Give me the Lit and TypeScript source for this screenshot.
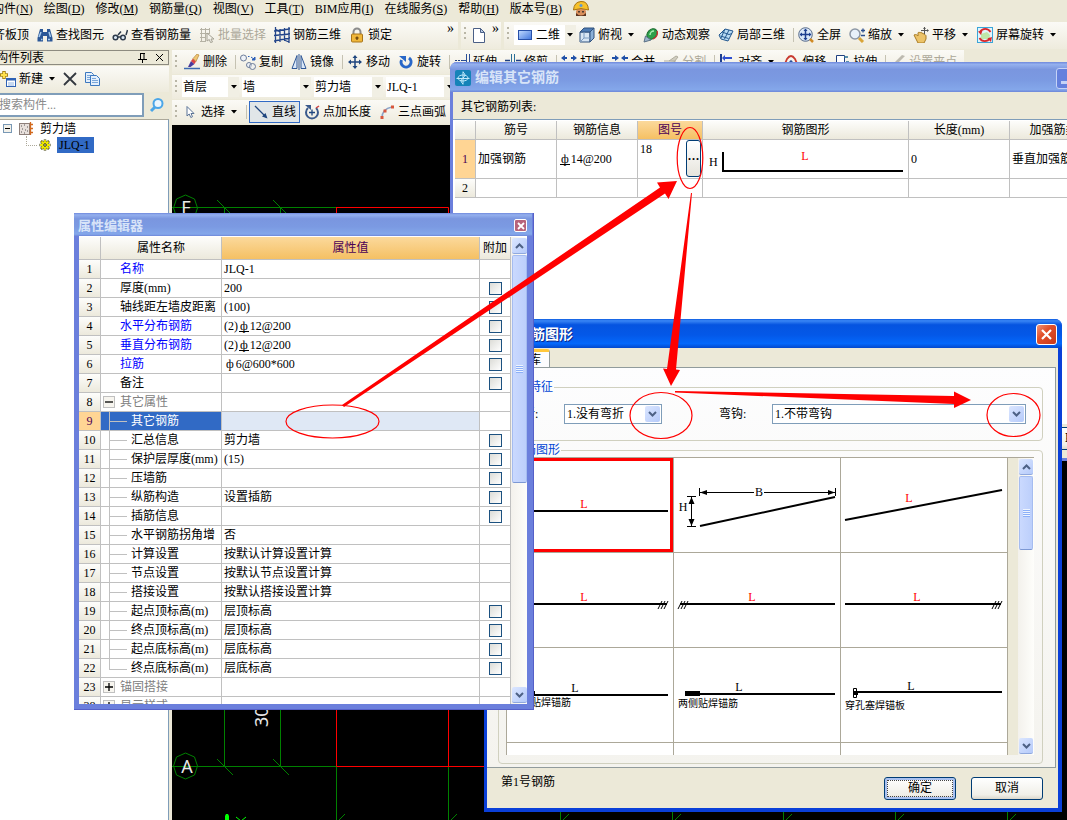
import { LitElement, html, css, svg, nothing, TemplateResult } from "lit";
import { customElement } from "lit/decorators.js";
import { classMap } from "lit/directives/class-map.js";

const icon = (body: TemplateResult) =>
  html`<svg class="ic" width="16" height="16" viewBox="0 0 16 16" aria-hidden="true">${body}</svg>`;

const caret = html`<svg class="caret" width="6" height="4" viewBox="0 0 6 4" aria-hidden="true"><path d="M0 0h6L3 3.5z" fill="#000"/></svg>`;

const icons: Record<string, TemplateResult> = {
  binoculars: icon(svg`<path d="M3 2h3v3h4V2h3l2.500 9v3.500H10V9H6v5.500H.5V11z" fill="#2b5797"/><path d="M2 10l2-5M12 5l1.500 5M4 12.500h1.500M11 12.500h2" stroke="#a9cdf0" stroke-width="1.500"/>`),
  glasses: icon(svg`<path d="M6 8l3-3.500M14 8l1.500-5" stroke="#2d3a4a" fill="none" stroke-width="1.500"/><circle cx="3.500" cy="10.500" r="2.300" fill="#dbe8f4" stroke="#2d3a4a" stroke-width="1.500"/><circle cx="11" cy="10.500" r="2.300" fill="#dbe8f4" stroke="#2d3a4a" stroke-width="1.500"/><path d="M6 10h3" stroke="#2d3a4a" stroke-width="1.500"/>`),
  batch: icon(svg`<path d="M1 2.500h10M1 6.500h10M1 10.500h6M1 14.500h6M2.500 1v14M6.500 1v14M10.500 1v5" stroke="#b5b2a4" fill="none"/><path d="M8 6l7 6h-3l1.500 3-2 .5-1.200-3L8 14z" fill="#f4f2ea" stroke="#a5a294"/>`),
  mesh: icon(svg`<path d="M1.500 0v16M6 2v13M10.500 1v13M15 0v16M0 4l16-2M0 8.500L16 7M0 14l16-3M1 2l5 3M10 13l5 2" stroke="#23458a" fill="none" stroke-width="1.300"/>`),
  lock: icon(svg`<path d="M4.500 8V5a3.500 3.500 0 017 0v3" fill="none" stroke="#8b8b8b" stroke-width="2"/><rect x="2.500" y="7" width="11" height="8" rx="1" fill="#f0b73a" stroke="#a8741a"/><path d="M8 9.500v3.500M6.500 11h3" stroke="#6a430a" stroke-width="1.300"/>`),
  page: icon(svg`<path d="M2.500 1.500h7l4 4v10h-11z" fill="#fff" stroke="#4a5f86"/><path d="M9.500 1.500v4h4z" fill="#b9cbe6" stroke="#4a5f86"/>`),
  plane: icon(svg`<defs><linearGradient id="pl" x1="0" y1="0" x2="1" y2="1"><stop offset="0" stop-color="#c4dcff"/><stop offset="1" stop-color="#3f74dd"/></linearGradient></defs><rect x="1.500" y="3.500" width="13" height="9" fill="url(#pl)" stroke="#2750a8"/>`),
  cube: icon(svg`<path d="M1 5h10v10H1z" fill="#d8e6f4" stroke="#31527f"/><path d="M1 5l4-4h10l-4 4z" fill="#4f7db5" stroke="#31527f"/><path d="M11 5l4-4v10l-4 4z" fill="#8bb0d8" stroke="#31527f"/><path d="M5 5v6h6M5 11l-4 4" stroke="#7c9cc0" fill="none"/>`),
  orbit: icon(svg`<ellipse cx="9" cy="7" rx="5.800" ry="4.500" transform="rotate(-45 9 7)" fill="#2fa04a" stroke="#1c6b30"/><path d="M7 8a4 4 0 014-4" stroke="#a9efb2" fill="none" stroke-width="1.500"/><path d="M10 12c4-2 5-5 4-8" stroke="#c33" fill="none" stroke-width="1.300"/><path d="M1 15l1.500-6 5.500 4z" fill="#9db4ca" stroke="#5b7186"/>`),
  local3d: icon(svg`<path d="M1 8l6-6 8 2-5 10-7-2z" fill="#b9dcf4" stroke="#23588f"/><path d="M4 5l7 2.500M7 2l-4 9M11 3L6.500 12M11 7.500l3-1M2.500 9l8 2.500" stroke="#23588f" fill="none"/>`),
  fullscreen: icon(svg`<circle cx="7.500" cy="7.500" r="6.800" fill="#d9e7f8" stroke="#5a6d8c"/><path d="M7.500 2.500v10M2.500 7.500h10" stroke="#1d3f8f" stroke-width="1.500"/><path d="M7.500 1.500L5.500 4h4zM7.500 13.500l-2-2.500h4zM1.500 7.500L4 5.500v4zM13.500 7.500L11 5.500v4z" fill="#1d3f8f"/><path d="M12 12l3 3" stroke="#d08a24" stroke-width="2.500"/>`),
  zoom: icon(svg`<circle cx="6" cy="7" r="5" fill="#e8f1fa" stroke="#8c97a6" stroke-width="1.500"/><path d="M10 11l4 4" stroke="#d9a437" stroke-width="3"/><path d="M12 3.500h4M14 1.500v4M12 8.500h4" stroke="#2d4f8f" stroke-width="1.300"/>`),
  pan: icon(svg`<path d="M1 8c2-1 3 0 4 1V6c0-1 2-1 2 0 1-1 2-1 2 .5 1-.5 2 0 2 1 1 0 2 .5 2 1.500v3l-2 4H5z" fill="#ecc368" stroke="#a87b24"/><path d="M11.500 0v7M8 3.500h7" stroke="#555"/><path d="M11.500 0L10 2h3zM16 3.500L14 2v3z" fill="#555"/>`),
  screenrot: icon(svg`<rect x=".5" y=".5" width="15" height="15" fill="#e2f3fb" stroke="#3aa5d8"/><path d="M4 12h8l1-4-3-3-6 2z" fill="#bfe6a8"/><path d="M13.500 5A6 6 0 003 5M2.500 11a6 6 0 0010.500 0" stroke="#d8282c" fill="none" stroke-width="1.800"/><path d="M1 4.500l4.500-1L4 8zM15 10l-4.500 1.500L14 15z" fill="#d8282c"/>`),
  brush: icon(svg`<path d="M0 14.500h16" stroke="#3d6bb0" stroke-width="1.500"/><path d="M4 13l3-6 3.500 3-4 3z" fill="#4a3a9c"/><path d="M7 7l2-2.500 3 3-1.500 2.500z" fill="#d44"/><path d="M9 4.500L13 0l2 1-3 6.500z" fill="#f0c674" stroke="#a8792c" stroke-width=".6"/>`),
  copyobj: icon(svg`<circle cx="3.500" cy="4" r="3" fill="#eef2f8" stroke="#6c7c99"/><circle cx="9" cy="11" r="2.500" fill="#eef2f8" stroke="#6c7c99"/><circle cx="12.500" cy="12.500" r="3" fill="#eef2f8" fill-opacity=".5" stroke="#6c7c99"/><path d="M8 2.500h1.500M11 3l2 1.500M12 6h3V3z" stroke="#2c5fb8" fill="#2c5fb8"/>`),
  mirror: icon(svg`<path d="M6 1.500V14.500H1zM10 1.500V14.500h5z" fill="#dbe8f8" stroke="#2f5796"/><path d="M8 0v16" stroke="#2f5796"/>`),
  move: icon(svg`<path d="M8 2v12M2 8h12" stroke="#1f467f" stroke-width="1.500"/><path d="M8 1L5.500 4h5zM8 15l-2.500-3h5zM1 8l3-2.500v5zM15 8l-3-2.500v5z" fill="#1f467f"/>`),
  rotate: icon(svg`<path d="M11 4a5 5 0 11-7.500 2" fill="none" stroke="#2867c8" stroke-width="3"/><path d="M1 2h7v6z" fill="#2867c8"/>`),
  extend: icon(svg`<path d="M1 6.500h8" stroke="#1f3f7f" stroke-dasharray="2 1"/><path d="M12.500 0v14M15.500 0v14M8 6.500h4" stroke="#2a4f98"/>`),
  trim: icon(svg`<path d="M0 6.500h5M11 6.500h5" stroke="#1f3f7f" stroke-width="1.500"/><path d="M6.500 0v12M9.500 0v12" stroke="#2a6f98"/>`),
  breaks: icon(svg`<path d="M0 4l4-3v2h2v2H4v2zM16 4l-4-3v2h-2v2h2v2z" fill="#1e4fa8"/>`),
  join: icon(svg`<path d="M7 4L3 1v2H0v2h3v2zM9 4l4-3v2h3v2h-3v2z" fill="#1e4fa8"/>`),
  split: icon(svg`<path d="M1 7h12M6 7l7-5 2 1-4 5" stroke="#b0ad9e" fill="#cfccbf"/>`),
  align: icon(svg`<path d="M2 0v14" stroke="#1f3f8f" stroke-width="2"/><path d="M4 4h9M4 9h6" stroke="#2f4fd0" stroke-width="2"/><path d="M6 1L3 4l3 3z" fill="#2f4fd0"/>`),
  offset: icon(svg`<path d="M1 12l3-7q4-6 8 0l3 7" fill="none" stroke="#c8392f" stroke-width="1.800"/><path d="M5 12l2-4q1-2 2 0l2 4" fill="none" stroke="#2a4f98" stroke-width="1.500"/>`),
  stretch: icon(svg`<path d="M2.500 1.500h8v11h-8z" fill="#fff" stroke="#1f3f7f"/><path d="M10 3h4M12 8h3" stroke="#2a6f98" stroke-width="1.500"/>`),
  pen: icon(svg`<path d="M1 12L12 1l3 1L6 11z" fill="#bdbab0"/>`),
  cursor: icon(svg`<path d="M5 2.500v9.500l2.200-2 1.600 3.500 1.700-.8L9 9.500h3z" fill="#fff" stroke="#5a7396"/>`),
  line: icon(svg`<path d="M2 2l11 11" stroke="#1f467f" stroke-width="1.300"/><path d="M14.500 14.500L9 12.500l3.500-3.500z" fill="#1f467f"/>`),
  pointlen: icon(svg`<path d="M12 4A6 6 0 114 4" fill="none" stroke="#3b5a8c" stroke-width="2"/><path d="M1 1h6v5z" fill="#3b5a8c"/><path d="M8 5.500v6M5 8.500h6" stroke="#1f467f" stroke-width="1.300"/><path d="M12 4l3-2" stroke="#d04040" stroke-width="1.500"/>`),
  arc: icon(svg`<path d="M3 14C3 7 7 4 13 3" fill="none" stroke="#8aa3c8" stroke-width="1.500"/><rect x="1.500" y="12" width="3" height="3" fill="#d8573c"/><rect x="4.500" y="5.500" width="3" height="3" fill="#d8573c"/><rect x="12" y="1.500" width="3" height="3" fill="#d8573c"/>`),
  create: icon(svg`<rect x="6.500" y="7.500" width="9" height="8" fill="#fff" stroke="#2f62b5"/><path d="M6.500 8.500h9" stroke="#2f62b5" stroke-width="2"/><path d="M8 12h6M8 14h6" stroke="#8fb3e3"/><path d="M4 0v8M0 4h8" stroke="#a8861a" stroke-width="3.500"/><path d="M4 1v6M1 4h6" stroke="#ffe14d" stroke-width="2"/>`),
  remove: icon(svg`<path d="M2 2l12 12M14 2L2 14" stroke="#33383f" stroke-width="1.800"/>`),
  copy: icon(svg`<path d="M1.500 1.500h6l2 2v8h-8z" fill="#e3effc" stroke="#3c78bf"/><path d="M3 4.500h4M3 6.500h4M3 8.500h3" stroke="#7aa7da"/><path d="M6.500 4.500h6l3 3v7h-9z" fill="#e3effc" stroke="#3c78bf"/><path d="M8 7.500h4M8 9.500h6M8 11.500h6" stroke="#7aa7da"/>`),
  search: icon(svg`<circle cx="9" cy="6.500" r="4.500" fill="#eaf6ff" stroke="#4ba6e8" stroke-width="2"/><path d="M6 10l-4 4" stroke="#4ba6e8" stroke-width="3"/>`),
  wall: icon(svg`<rect x="1.500" y="2.500" width="10" height="11" fill="#e8e0dc" stroke="#8d7f7a"/><path d="M3 5h1M6 4h1M9 6h1M4 8h1M7 9h1M3 11h1M6 12h1M9 10h1" stroke="#555"/><path d="M12.500 1v13M12 3.500h3M12 7.500h3M12 11.500h3" stroke="#d2691e" stroke-width="1.300"/>`),
  gear: icon(svg`<path d="M8 2.500v11M2.500 8h11M4 4l8 8M12 4l-8 8" stroke="#3a3800" stroke-width="2.500"/><path d="M8 3v10M3 8h10M4.500 4.500l7 7M11.500 4.500l-7 7" stroke="#f2ec00" stroke-width="1.800"/><circle cx="8" cy="8" r="3" fill="#f2ec00"/><circle cx="8" cy="8" r="1.300" fill="#fff" stroke="#3a3800"/>`),
  worker: icon(svg`<rect x="3" y="8" width="10" height="7" rx="3" fill="#d98f5c"/><path d="M3 12q5 5 10 0v3H3z" fill="#5a3420"/><path d="M.5 9Q1 1 8 .5t7.500 8.500q-7.500-3-15 0z" fill="#f7c22b" stroke="#a8740e"/><circle cx="8" cy="4.500" r="1.500" fill="#5a9ad8"/><path d="M6 10v1.500M10 10v1.500" stroke="#222" stroke-width="1.500"/>`),
  app: icon(svg`<rect width="16" height="16" rx="2" fill="#1583b8"/><path d="M8 1.500v13M1.500 8.500h13" stroke="#bfe9fa"/><ellipse cx="8" cy="8" rx="5" ry="3" fill="none" stroke="#bfe9fa"/><path d="M8 2q4 3 0 6t0 6" stroke="#bfe9fa" fill="none"/>`),
};

type Tool = { icon: string; label?: string; drop?: boolean; off?: boolean; on?: boolean } | "|";

const menus = ["构件(N)", "绘图(D)", "修改(M)", "钢筋量(Q)", "视图(V)", "工具(T)", "BIM应用(I)", "在线服务(S)", "帮助(H)", "版本号(B)"];

const mainTools: Tool[] = [
  { icon: "", label: "齐板顶" },
  { icon: "binoculars", label: "查找图元" },
  { icon: "glasses", label: "查看钢筋量" },
  { icon: "batch", label: "批量选择", off: true },
  { icon: "mesh", label: "钢筋三维" },
  { icon: "lock", label: "锁定" },
];
const viewTools: Tool[] = [
  { icon: "cube", label: "俯视", drop: true },
  { icon: "orbit", label: "动态观察" },
  { icon: "local3d", label: "局部三维" },
  "|",
  { icon: "fullscreen", label: "全屏" },
  { icon: "zoom", label: "缩放", drop: true },
  { icon: "pan", label: "平移", drop: true },
  { icon: "screenrot", label: "屏幕旋转", drop: true },
];
const editTools: Tool[] = [
  { icon: "brush", label: "删除" }, "|",
  { icon: "copyobj", label: "复制" },
  { icon: "mirror", label: "镜像" }, "|",
  { icon: "move", label: "移动" },
  { icon: "rotate", label: "旋转" }, "|",
  { icon: "extend", label: "延伸" },
  { icon: "trim", label: "修剪" }, "|",
  { icon: "breaks", label: "打断" },
  { icon: "join", label: "合并" },
  { icon: "split", label: "分割", off: true }, "|",
  { icon: "align", label: "对齐", drop: true },
  { icon: "offset", label: "偏移" },
  { icon: "stretch", label: "拉伸" }, "|",
  { icon: "pen", label: "设置夹点", off: true },
];
const drawTools: Tool[] = [
  { icon: "cursor", label: "选择", drop: true }, "|",
  { icon: "line", label: "直线", on: true },
  { icon: "pointlen", label: "点加长度" },
  { icon: "arc", label: "三点画弧" },
];

type Prop = { n: number; name: string; value?: unknown; check?: boolean; kind?: "link" | "group" | "child" | "last"; open?: boolean; sel?: boolean };
const bar2 = html`<span class="bar2">ф</span>`;
const props: Prop[] = [
  { n: 1, name: "名称", value: "JLQ-1", kind: "link" },
  { n: 2, name: "厚度(mm)", value: "200", check: true },
  { n: 3, name: "轴线距左墙皮距离", value: "(100)", check: true },
  { n: 4, name: "水平分布钢筋", value: html`(2)${bar2}12@200`, check: true, kind: "link" },
  { n: 5, name: "垂直分布钢筋", value: html`(2)${bar2}12@200`, check: true, kind: "link" },
  { n: 6, name: "拉筋", value: html`<span class="bar1">ф</span>6@600*600`, check: true, kind: "link" },
  { n: 7, name: "备注", check: true },
  { n: 8, name: "其它属性", kind: "group", open: true },
  { n: 9, name: "其它钢筋", kind: "child", sel: true },
  { n: 10, name: "汇总信息", value: "剪力墙", check: true, kind: "child" },
  { n: 11, name: "保护层厚度(mm)", value: "(15)", check: true, kind: "child" },
  { n: 12, name: "压墙筋", check: true, kind: "child" },
  { n: 13, name: "纵筋构造", value: "设置插筋", check: true, kind: "child" },
  { n: 14, name: "插筋信息", check: true, kind: "child" },
  { n: 15, name: "水平钢筋拐角增", value: "否", kind: "child" },
  { n: 16, name: "计算设置", value: "按默认计算设置计算", kind: "child" },
  { n: 17, name: "节点设置", value: "按默认节点设置计算", kind: "child" },
  { n: 18, name: "搭接设置", value: "按默认搭接设置计算", kind: "child" },
  { n: 19, name: "起点顶标高(m)", value: "层顶标高", check: true, kind: "child" },
  { n: 20, name: "终点顶标高(m)", value: "层顶标高", check: true, kind: "child" },
  { n: 21, name: "起点底标高(m)", value: "层底标高", check: true, kind: "child" },
  { n: 22, name: "终点底标高(m)", value: "层底标高", check: true, kind: "last" },
  { n: 23, name: "锚固搭接", kind: "group" },
  { n: 38, name: "显示样式", kind: "group" },
];

const hatch = (x: number, y: number) =>
  svg`<path d="M${x} ${y + 4}l4-8M${x + 3} ${y + 4}l4-8M${x + 6} ${y + 4}l4-8" stroke="#000"/>`;
const L = (x: number, y: number, red = true) =>
  svg`<text x=${x} y=${y} text-anchor="middle" fill=${red ? "#f00" : "#000"}>L</text>`;

// Each bar shape is drawn in a 166 x 94 box.
const shapes: { label: string; body: TemplateResult | typeof nothing }[] = [
  { label: "直筋", body: svg`<path d="M6 53h155" class="bar"/>${L(77, 50)}` },
  { label: "斜筋 B H", body: svg`<path d="M26 68l135-29" class="bar"/><text x="9" y="53" text-anchor="middle">H</text><path d="M17.500 38v30M13 38.500h9M13 68.500h9M25.500 30v8M161.500 30v8M26 34.500h54M90 34.500h71" stroke="#000"/><path d="M17.500 39l-3 7h6zM17.500 68l-3-7h6zM26 34.500l7-2.500v5zM161 34.500l-7-2.500v5z"/><text x="85" y="38" text-anchor="middle">B</text>` },
  { label: "斜筋", body: svg`<path d="M4 62l157-30" class="bar"/>${L(68, 44)}` },
  { label: "右端锚固", body: svg`<path d="M6 51h154" class="bar"/>${hatch(151, 52)}${L(77, 48)}` },
  { label: "左端锚固", body: svg`<path d="M6 51h155" class="bar"/>${hatch(4, 52)}${L(78, 48)}` },
  { label: "端部锚固", body: svg`<path d="M4 51h156" class="bar"/>${hatch(151, 52)}${L(76, 48)}` },
  { label: "单侧贴焊", body: svg`<path d="M12 47h149" class="bar"/><path d="M12 43h16v5H12z"/>${L(68, 44, false)}<text class="cap" x="4" y="58">单侧贴焊锚筋</text>` },
  { label: "两侧贴焊", body: svg`<path d="M12 46h149" class="bar"/><path d="M11 43h15v5H11z"/>${L(65, 43, false)}<text class="cap" x="4" y="59">两侧贴焊锚筋</text>` },
  { label: "穿孔塞焊", body: svg`<path d="M16 44h145" class="bar"/><path d="M12.500 40.500h3v9h-3z" fill="#fff" stroke="#000"/><path d="M13 43h4v4h-4z"/>${L(70, 42, false)}<text class="cap" x="4" y="61">穿孔塞焊锚板</text>` },
  { label: "", body: nothing },
  { label: "", body: nothing },
  { label: "", body: nothing },
];

const chevron = (up: boolean) =>
  html`<svg width="9" height="6" viewBox="0 0 9 6" aria-hidden="true"><path d=${up ? "M1 5l3.500-3.500L8 5" : "M1 1l3.500 3.500L8 1"} fill="none" stroke="#4d6185" stroke-width="2"/></svg>`;

@customElement("app-root")
export class AppRoot extends LitElement {
  static styles = css`
    :host {
      display: block; position: relative; height: 100vh; overflow: hidden; background: #ece9d8; color: #000;
      font: 12px/18px "Liberation Serif", "Noto Sans CJK SC", sans-serif;
    }
    * { box-sizing: border-box; }
    button, input, select { font: inherit; color: inherit; margin: 0; padding: 0; border: 0; background: none; border-radius: 0; }
    button { display: flex; align-items: center; white-space: nowrap; }
    svg { display: block; flex: none; }
    h2 { margin: 0; font: inherit; }
    .frame { height: 100%; margin-left: -8px; display: flex; flex-direction: column; }
    .menu { display: flex; align-items: center; gap: 11px; height: 17px; margin-bottom: 5px; }
    .bars { display: flex; gap: 3px; margin-bottom: 1px; }
    .strip { display: flex; align-items: center; background: linear-gradient(#fbfaf6, #eeebdd); padding: 0 2px; }
    .bars .strip { height: 27px; padding-bottom: 2px; }
    .bars .main { width: 466px; padding: 0 4px 2px 1px; }
    .bars .mini { width: 40px; }
    .bars .view { flex: 1; }
    .tool { gap: 3px; margin-right: 8px; height: 22px; flex: none; }
    .tool.off { color: #aca899; }
    .tool.on { border: 1px solid #316ac5; background: #e1e6e8; padding: 0 3px; margin-right: 4px; margin-left: -2px; }
    .caret { margin: 0 1px 0 3px; }
    .sep { width: 1px; height: 14px; background: #c5c2b2; margin-right: 4px; flex: none; }
    .grip { width: 2px; height: 15px; margin: 0 5px 0 1px; flex: none; background: repeating-linear-gradient(#b9b6a6 0 2px, transparent 2px 5px); }
    .more { margin-left: auto; font-size: 14px; height: 14px; align-self: flex-start; }
    .combo { display: grid; background: #fff; height: 20px; flex: none; margin-right: 3px; }
    .combo > * { grid-area: 1 / 1; }
    .combo select { appearance: none; width: 100%; padding: 0 14px 0 1px; outline: 0; }
    .combo .drop { justify-self: end; width: 11px; display: grid; place-items: center; background: #f1efe4; pointer-events: none; }
    .combo .drop .caret { margin: 0; }
    .combo .ic { align-self: center; margin-left: 3px; }
    .combo .iconic { padding-left: 22px; }
    .w57 { width: 57px; } .w62 { width: 62px; } .w69 { width: 69px; }
    .work { flex: 1; display: flex; min-height: 0; }
    .side { width: 177px; flex: none; display: flex; flex-direction: column; }
    .cap-bar { height: 15px; border: 1px solid #8d8b80; border-left: 0; display: flex; align-items: center; gap: 8px; padding: 0 4px; }
    .cap-bar h2 { margin-right: auto; line-height: 12px; }
    .side .strip { height: 26px; padding: 0 8px; margin: 1px 0; }
    .side .tool { margin-right: 6px; }
    .find { display: flex; height: 24px; }
    .find input { width: 152px; border: 2px solid #7f9db9; background: #fff; padding-left: 5px; color: #8a8a8a; outline: 0; }
    .find button { flex: 1; justify-content: center; }
    .tree { flex: 1; border-top: 1px solid #aca899; border-right: 1px solid #7f9db9; background: #fff; margin-top: 2px; padding: 0 0 0 11px; }
    .node { display: flex; align-items: center; height: 17px; gap: 6px; }
    .node .toggle { width: 9px; height: 9px; border: 1px solid #7898b5; background: #f3f1ea; display: grid; place-items: center; }
    .node.kid { position: relative; padding-left: 34px; gap: 4px; margin-top: -1px; }
    .node.kid::before { content: ""; position: absolute; left: 23px; top: 0; width: 10px; height: 9px; border: dotted #aca899; border-width: 0 0 1px 1px; }
    .node .pick { background: #316ac5; line-height: 16px; padding: 0 4px 0 2px; }
    .right { flex: 1; min-width: 0; display: flex; flex-direction: column; padding-left: 3px; }
    .right .strip { height: 24px; margin-bottom: 1px; }
    .edit { width: 792px; }
    .edit .grip { margin-right: 7px; }
    .combos { width: 600px; }
    .cad { flex: 1; width: 100%; min-height: 0; background: #000; }
    .cad text { fill: #e8e8e8; font: 18px "Noto Sans", sans-serif; }

    .win { position: absolute; display: flex; flex-direction: column; }
    .bar-t { display: flex; align-items: center; font-weight: bold; font-size: 14px; gap: 4px; flex: none; }
    .soft { color: #d8e4f8; background: linear-gradient(#6f88dc, #94b0ee 8%, #7a96df 25%, #7b9ae2 60%, #84a7ea 92%, #6d86d8); }
    .w-steel { left: 450px; top: 62px; width: 680px; height: 399px; background: #6b7fdc; padding: 0 3px 3px; border-radius: 7px 0 0 0; }
    .w-steel .bar-t { height: 30px; margin: 0 -3px; padding: 2px 53px 0 5px; border-radius: 7px 0 0 0; }
    .w-steel .min { margin-left: auto; width: 21px; height: 21px; border: 1px solid #c5d3f7; border-radius: 3px; background: #6480dd; padding: 8px 0 0 4px; }
    .w-steel .min i { width: 8px; height: 3px; background: #c5d3f7; }
    .w-steel .body { flex: 1; background: #ece9d8; display: flex; flex-direction: column; }
    .w-steel .lead { height: 27px; padding: 6px 8px 0; }
    .w-steel .list { flex: 1; background: #fff; border-top: 1px solid #7f9db9; padding: 1px 2px; }
    .w-steel .foot { height: 34px; display: flex; gap: 12px; align-items: flex-start; justify-content: flex-end; padding: 3px 14px 0; }
    table { border-collapse: separate; border-spacing: 0; table-layout: fixed; }
    th, td { font-weight: normal; padding: 0 2px; border-right: 1px solid #c0c0c0; border-bottom: 1px solid #c0c0c0; white-space: nowrap; overflow: hidden; text-align: left; }
    th { text-align: center; padding: 0; background: linear-gradient(#fdfdfb, #ece9dc); }
    .hot { background: linear-gradient(#fbd99c, #f5c063); color: #4b0055; }
    th.cur { background: #ffd594; color: #4b0055; }
    .steel { width: 655px; }
    .steel thead th { height: 19px; }
    .steel .r1 > * { height: 39px; }
    .steel .r2 > * { height: 19px; }
    .no { display: flex; justify-content: space-between; height: 38px; }
    .no button { width: 15px; height: 37px; border: 1px solid #003c74; border-radius: 3px; background: linear-gradient(#fff, #e6e4dc); justify-content: center; font-weight: bold; }
    .steel .no-cell { padding: 0 1px 0 2px; }
    .steel .pic { padding: 0; }
    .bar { stroke: #000; stroke-width: 2; fill: none; }
    svg text { font: 12px "Liberation Serif", "Noto Sans CJK SC", sans-serif; }

    .w-shape { left: 484px; top: 319px; width: 578px; height: 493px; background: #0a3fd8; padding: 0 4px 4px 3px; border-radius: 7px 7px 0 0; }
    .w-shape .bar-t { height: 29px; margin: 0 -4px 0 -3px; padding: 2px 5px 0; border-radius: 7px 7px 0 0; color: #fff; text-shadow: 1px 1px #0a2a8c; background: linear-gradient(#0a5ae0, #3a86f5 6%, #0554e0 20%, #0458e8 55%, #0468fb 85%, #0348cc); }
    .x { margin-left: auto; width: 21px; height: 21px; border: 1px solid #fff; border-radius: 3px; background: linear-gradient(135deg, #ee9478, #e2502a 40%, #c8381a); justify-content: center; }
    .w-shape .body { flex: 1; background: #ece9d8; display: flex; flex-direction: column; min-height: 0; }
    .tab { width: 63px; height: 19px; border-top: 3px solid #ffc73c; border-right: 1px solid #919b9c; border-radius: 0 3px 0 0; background: #fcfcfe; justify-content: flex-end; padding-right: 8px; line-height: 14px; margin-top: 1px; }
    .sheet { height: 401px; flex: none; border: 1px solid #919b9c; border-left: 0; margin: -1px 2px 0 0; background: linear-gradient(#fdfdfe, #f4f3ee); padding: 10px 12px 4px 11px; }
    fieldset { margin: 0; padding: 0; border: 1px solid #d0d0bf; border-radius: 4px; min-width: 0; }
    legend { color: #0046d5; padding: 0 1px; margin-left: 5px; line-height: 18px; }
    .opts { height: 44px; display: flex; align-items: center; padding: 0 16px 8px 12px; }
    .opts label { width: 53px; }
    .opts .l2 { margin-left: 57px; }
    .xsel { display: grid; height: 20px; width: 98px; }
    .xsel.wide { flex: 1; }
    .xsel > * { grid-area: 1 / 1; }
    .xsel select { appearance: none; border: 1px solid #7f9db9; background: #fff; padding-left: 2px; width: 100%; outline: 0; }
    .xsel span, .sb button { border-radius: 2px; background: linear-gradient(135deg, #dbe6ff, #b5cafa); display: grid; place-items: center; }
    .xsel span { justify-self: end; align-self: center; width: 15px; height: 16px; margin-right: 2px; pointer-events: none; }
    .set { height: 323px; padding: 0 8px 7px 7px; }
    .set legend { margin-bottom: -2px; }
    .scroller { display: flex; height: 298px; border-top: 1px solid #aca899; overflow: hidden; }
    .shapes { display: grid; grid-template-columns: repeat(3, 167px); grid-auto-rows: 95px; border-left: 1px solid #aca899; align-self: flex-start; }
    .shape { background: #fff; border: 0 solid #aca899; border-width: 0 1px 1px 0; overflow: hidden; }
    .shape.sel { box-shadow: inset 0 0 0 3px #f00; }
    .shape .cap { font-size: 10px; }
    .gap { flex: 1; background: #ece9d8; }
    .sb { width: 16px; flex: none; display: flex; flex-direction: column; background: linear-gradient(90deg, #f3f1ec, #fefefb); padding: 1px; }
    .sb button { height: 16px; flex: none; border-bottom: 1px solid #8fa8dd; }
    .sb .thumb { border-radius: 2px; border: 1px solid #a5bcf0; border-bottom-color: #7c98d4; background: linear-gradient(90deg, #cad9fe, #bccffb); margin: 1px 0 auto; display: grid; place-items: center; }
    .sb .thumb::after { content: ""; width: 7px; height: 8px; background: repeating-linear-gradient(#eef4fe 0 1px, #8cb0f8 1px 2px); }
    .t74 { height: 74px; } .t228 { height: 228px; }
    .actions { flex: 1; display: flex; align-items: center; gap: 15px; padding: 0 15px 0 14px; }
    .actions p { margin: 0 auto 12px 0; }
    .push { width: 72px; height: 23px; border: 1px solid #003c74; border-radius: 3px; background: linear-gradient(#fff, #f0efe8 80%, #dcd8cc); justify-content: center; }
    .push.focus { box-shadow: inset 0 0 0 2px #a9c1f0; outline: 1px dotted #444; outline-offset: -4px; }

    .w-props { left: 74px; top: 213px; width: 460px; height: 497px; background: #6b7fdc; padding: 0 6px 5px 5px; border: 1px solid #5560c8; border-width: 0 1px 1px 0; }
    .w-props .bar-t { height: 23px; margin: 0 -5px 0 -5px; padding: 2px 5px 0 4px; font-size: 13px; }
    .w-props .x { width: 13px; height: 13px; border-radius: 2px; background: #b8647a; }
    .w-props .body { flex: 1; min-height: 0; display: flex; background: #ece9d8; overflow: hidden; border-top: 1px solid #fff; }
    .grid { width: 432px; flex: none; background: #fff; align-self: flex-start; }
    .grid thead th { height: 23px; }
    .grid tbody > tr > * { height: 19px; line-height: 17px; }
    .grid .name { display: flex; align-items: center; padding-left: 17px; height: 18px; }
    .grid td.nm { padding: 0 0 0 2px; }
    .grid .link { color: #00f; }
    .grid .group { color: #808080; padding-left: 0; gap: 5px; }
    .grid .child { padding-left: 6px; }
    .grid .child::before { content: ""; width: 17px; height: 18px; margin-right: 4px; border-left: 1px solid #c0c0c0; background: linear-gradient(#c0c0c0, #c0c0c0) 0 9px / 17px 1px no-repeat; }
    .grid .last::before { height: 10px; align-self: flex-start; border-bottom: 1px solid #c0c0c0; background: none; }
    .grid .box { width: 12px; height: 12px; border: 1px solid #c0c0c0; background: #f7f5ef; display: grid; place-items: center; }
    .grid .picked { background: #316ac5; color: #fff; }
    .grid .value-on { background: #dfe8f5; }
    .grid .ck { text-align: center; padding: 0; }
    .grid input { appearance: none; display: block; width: 13px; height: 13px; margin: 0 auto; border: 1px solid #1c5180; background: linear-gradient(135deg, #dcdcd7, #fff); }
    .bar1, .bar2 { display: inline-block; line-height: 9px; height: 10px; padding: 0 1px; margin: 0 1px; }
    .bar2 { border-bottom: 1px solid #000; }
    .w-props .sb { margin-left: auto; width: 17px; }
    .notes { position: absolute; left: 0; top: 0; width: 100%; height: 100%; pointer-events: none; }
  `;

  private tools(list: Tool[]) {
    return list.map((t) =>
      t === "|"
        ? html`<span class="sep"></span>`
        : html`<button class=${classMap({ tool: true, off: !!t.off, on: !!t.on })}>
            ${t.icon ? icons[t.icon] : nothing}${t.label ? html`<span>${t.label}</span>` : nothing}${t.drop ? caret : nothing}
          </button>`
    );
  }

  private combo(value: string, label: string, width: string, ic?: string) {
    return html`<div class="combo ${width}">
      <select class=${ic ? "iconic" : ""} aria-label=${label}><option>${value}</option></select>
      ${ic ? icons[ic] : nothing}<span class="drop">${caret}</span>
    </div>`;
  }

  private scrollbar(size: string) {
    return html`<div class="sb">
      <button aria-label="向上">${chevron(true)}</button>
      <div class="thumb ${size}"></div>
      <button aria-label="向下">${chevron(false)}</button>
    </div>`;
  }

  private cad() {
    const tick = (x: number, y: number) => svg`<path d="M${x - 7} ${y - 7}l16 16"/>`;
    const ring = (y: number) => svg`<path d="M185.500 ${y - 13}l9 4 3 9-3 9-9 4-9-4-3-9 3-9z"/>`;
    return html`<svg class="cad" role="img" aria-label="绘图区"><g transform="translate(-172 -125)">
      <g fill="none" stroke="#008000">
        <path d="M172 207.500h164M172 766.500h164M224.500 207v559M280.500 207v559M336.500 766v60M448.500 766v60M560.500 811v15M672.500 811v15M783.500 811v15M895.500 811v15M1007.500 811v15"/>
        ${tick(224, 207)}${tick(280, 207)}${tick(224, 766)}${tick(280, 766)}${ring(208)}${ring(766)}
        <path d="M339 820l6-6M451 820l6-6M563 820l6-6M675 820l6-6M786 820l6-6M898 820l6-6M1010 820l6-6"/>
      </g>
      <path d="M336 207.500h112.500V766M336.500 207v559.500H490" fill="none" stroke="#f00"/>
      <path d="M225 822v-6l1-2h2l1 2v6z" fill="#0f0"/><path d="M236 817l5 4 5-4" stroke="#0f0" fill="none"/>
      <text x="186" y="214" text-anchor="middle">F</text>
      <text x="187" y="773" text-anchor="middle">A</text>
      <text transform="translate(268 727) rotate(-90)">3000</text>
    </g></svg>`;
  }

  private steelWindow() {
    return html`<section class="win w-steel">
      <div class="bar-t soft">${icons.app}<h2>编辑其它钢筋</h2><button class="min" aria-label="最小化"><i></i></button></div>
      <div class="body">
        <div class="lead">其它钢筋列表:</div>
        <div class="list">
          <table class="steel">
            <colgroup><col width="21"><col width="81"><col width="81"><col width="65"><col width="206"><col width="101"><col width="100"></colgroup>
            <thead><tr><th></th><th>筋号</th><th>钢筋信息</th><th class="hot">图号</th><th>钢筋图形</th><th>长度(mm)</th><th>加强筋类型</th></tr></thead>
            <tbody>
              <tr class="r1"><th class="cur">1</th><td>加强钢筋</td><td>${bar2}14@200</td>
                <td class="no-cell"><div class="no"><span>18</span><button aria-label="选择图号">···</button></div></td>
                <td class="pic"><svg width="205" height="38"><text x="6" y="26">H</text><path d="M20 12v19h180" class="bar"/>${L(102, 20)}</svg></td>
                <td>0</td><td>垂直加强筋</td></tr>
              <tr class="r2"><th>2</th><td></td><td></td><td></td><td></td><td></td><td></td></tr>
            </tbody>
          </table>
        </div>
        <div class="foot"><button class="push">确定</button><button class="push">取消</button></div>
      </div>
    </section>`;
  }

  private shapeWindow() {
    return html`<section class="win w-shape">
      <div class="bar-t"><h2>选择钢筋图形</h2>
        <button class="x" aria-label="关闭"><svg width="13" height="13"><path d="M2 2l9 9M11 2l-9 9" stroke="#fff" stroke-width="2.200"/></svg></button></div>
      <div class="body">
        <button class="tab">钢筋图库</button>
        <div class="sheet">
          <fieldset><legend>图形特征</legend>
            <div class="opts">
              <label for="bend">弯折:</label>
              <div class="xsel"><select id="bend"><option>1.没有弯折</option></select><span>${chevron(false)}</span></div>
              <label class="l2" for="hook">弯钩:</label>
              <div class="xsel wide"><select id="hook"><option>1.不带弯钩</option></select><span>${chevron(false)}</span></div>
            </div>
          </fieldset>
          <fieldset class="set"><legend>钢筋图形</legend>
            <div class="scroller">
              <div class="shapes">${shapes.map((s, i) => html`<button class=${classMap({ shape: true, sel: i === 0 })} aria-label=${s.label}>
                <svg width="166" height="94">${s.body}</svg></button>`)}</div>
              <div class="gap"></div>
              ${this.scrollbar("t74")}
            </div>
          </fieldset>
        </div>
        <div class="actions"><p>第1号钢筋</p><button class="push focus">确定</button><button class="push">取消</button></div>
      </div>
    </section>`;
  }

  private nameCell(p: Prop) {
    const child = p.kind === "child" || p.kind === "last";
    return html`<td class=${classMap({ nm: true, picked: !!p.sel })}>
      <div class=${classMap({ name: true, link: p.kind === "link", group: p.kind === "group", child, last: p.kind === "last" })}>
        ${p.kind === "group"
          ? html`<button class="box" aria-label=${p.open ? "折叠" : "展开"}><svg width="8" height="8"><path d=${p.open ? "M0 4h8" : "M0 4h8M4 0v8"} stroke="#000" stroke-width="1.300"/></svg></button>`
          : nothing}<span>${p.name}</span>
      </div></td>`;
  }

  private propsWindow() {
    return html`<section class="win w-props">
      <div class="bar-t soft"><h2>属性编辑器</h2>
        <button class="x" aria-label="关闭"><svg width="8" height="8"><path d="M1 1l6 6M7 1l-6 6" stroke="#fff" stroke-width="1.800"/></svg></button></div>
      <div class="body">
        <table class="grid">
          <colgroup><col width="22"><col width="121"><col width="258"><col width="31"></colgroup>
          <thead><tr><th></th><th>属性名称</th><th class="hot">属性值</th><th>附加</th></tr></thead>
          <tbody>${props.map((p) => html`<tr>
            <th class=${p.sel ? "cur" : ""}>${p.n}</th>${this.nameCell(p)}
            <td class=${classMap({ "value-on": !!p.sel })}>${p.value ?? nothing}</td>
            <td class="ck">${p.check ? html`<input type="checkbox" aria-label=${"附加 " + p.name}>` : nothing}</td>
          </tr>`)}</tbody>
        </table>
        ${this.scrollbar("t228")}
      </div>
    </section>`;
  }

  render() {
    return html`
      <div class="frame">
        <nav class="menu">${menus.map((m) => html`<button>${m.split("(")[0]}(<u>${m.slice(-2, -1)}</u>)</button>`)}${icons.worker}</nav>
        <div class="bars">
          <div class="strip main">${this.tools(mainTools)}<button class="more" aria-label="更多">»</button></div>
          <div class="strip mini"><span class="grip"></span>${icons.page}<button class="more" aria-label="更多">»</button></div>
          <div class="strip view"><span class="grip"></span>${this.combo("二维", "视图模式", "w62", "plane")}${this.tools(viewTools)}</div>
        </div>
        <div class="work">
          <aside class="side">
            <div class="cap-bar"><h2>构件列表</h2>
              <svg width="9" height="10"><path d="M2.500 0v6M2 .5h5M6 0v6M0 6.500h9M4.500 6v4" stroke="#000" fill="none"/></svg>
              <svg width="9" height="9"><path d="M1 1l7 7M8 1L1 8" stroke="#000"/></svg>
            </div>
            <div class="strip">${this.tools([{ icon: "create", label: "新建", drop: true }, { icon: "remove" }, { icon: "copy" }])}</div>
            <div class="find"><input aria-label="搜索构件" value="搜索构件..."><button aria-label="搜索">${icons.search}</button></div>
            <div class="tree">
              <div class="node"><button class="toggle" aria-label="折叠"><svg width="5" height="1"><path d="M0 .5h5" stroke="#000"/></svg></button>${icons.wall}<span>剪力墙</span></div>
              <div class="node kid">${icons.gear}<span class="pick">JLQ-1</span></div>
            </div>
          </aside>
          <main class="right">
            <div class="strip edit"><span class="grip"></span>${this.tools(editTools)}</div>
            <div class="strip combos"><span class="grip"></span>${this.combo("首层", "楼层", "w57")}${this.combo("墙", "构件类别", "w69")}${this.combo("剪力墙", "构件类型", "w69")}${this.combo("JLQ-1", "构件名称", "w69")}</div>
            <div class="strip combos"><span class="grip"></span>${this.tools(drawTools)}</div>
            ${this.cad()}
          </main>
        </div>
      </div>
      ${this.steelWindow()}${this.shapeWindow()}${this.propsWindow()}
      <svg class="notes" aria-hidden="true">
        <g fill="none" stroke="#f00" stroke-width="1.200">
          <ellipse cx="332.500" cy="421.500" rx="46.500" ry="16.500"/><ellipse cx="690" cy="158" rx="12.800" ry="30.500"/>
          <ellipse cx="661" cy="415.500" rx="31" ry="23"/><ellipse cx="1013.500" cy="415" rx="26.500" ry="21.500"/>
        </g>
        <g fill="#f00">
          <path d="M342 405l318-217.500-3-5 20-1.500-8.500 18-3.500-5.500L344 407z"/>
          <path d="M691 193l-24 176-4-.5 8 17.500 9-16-4-.5L692 193z"/>
          <path d="M675 391l279 5v-4.500l17 8.500-17 8v-4L675 392.500z"/>
        </g>
      </svg>`;
  }
}
